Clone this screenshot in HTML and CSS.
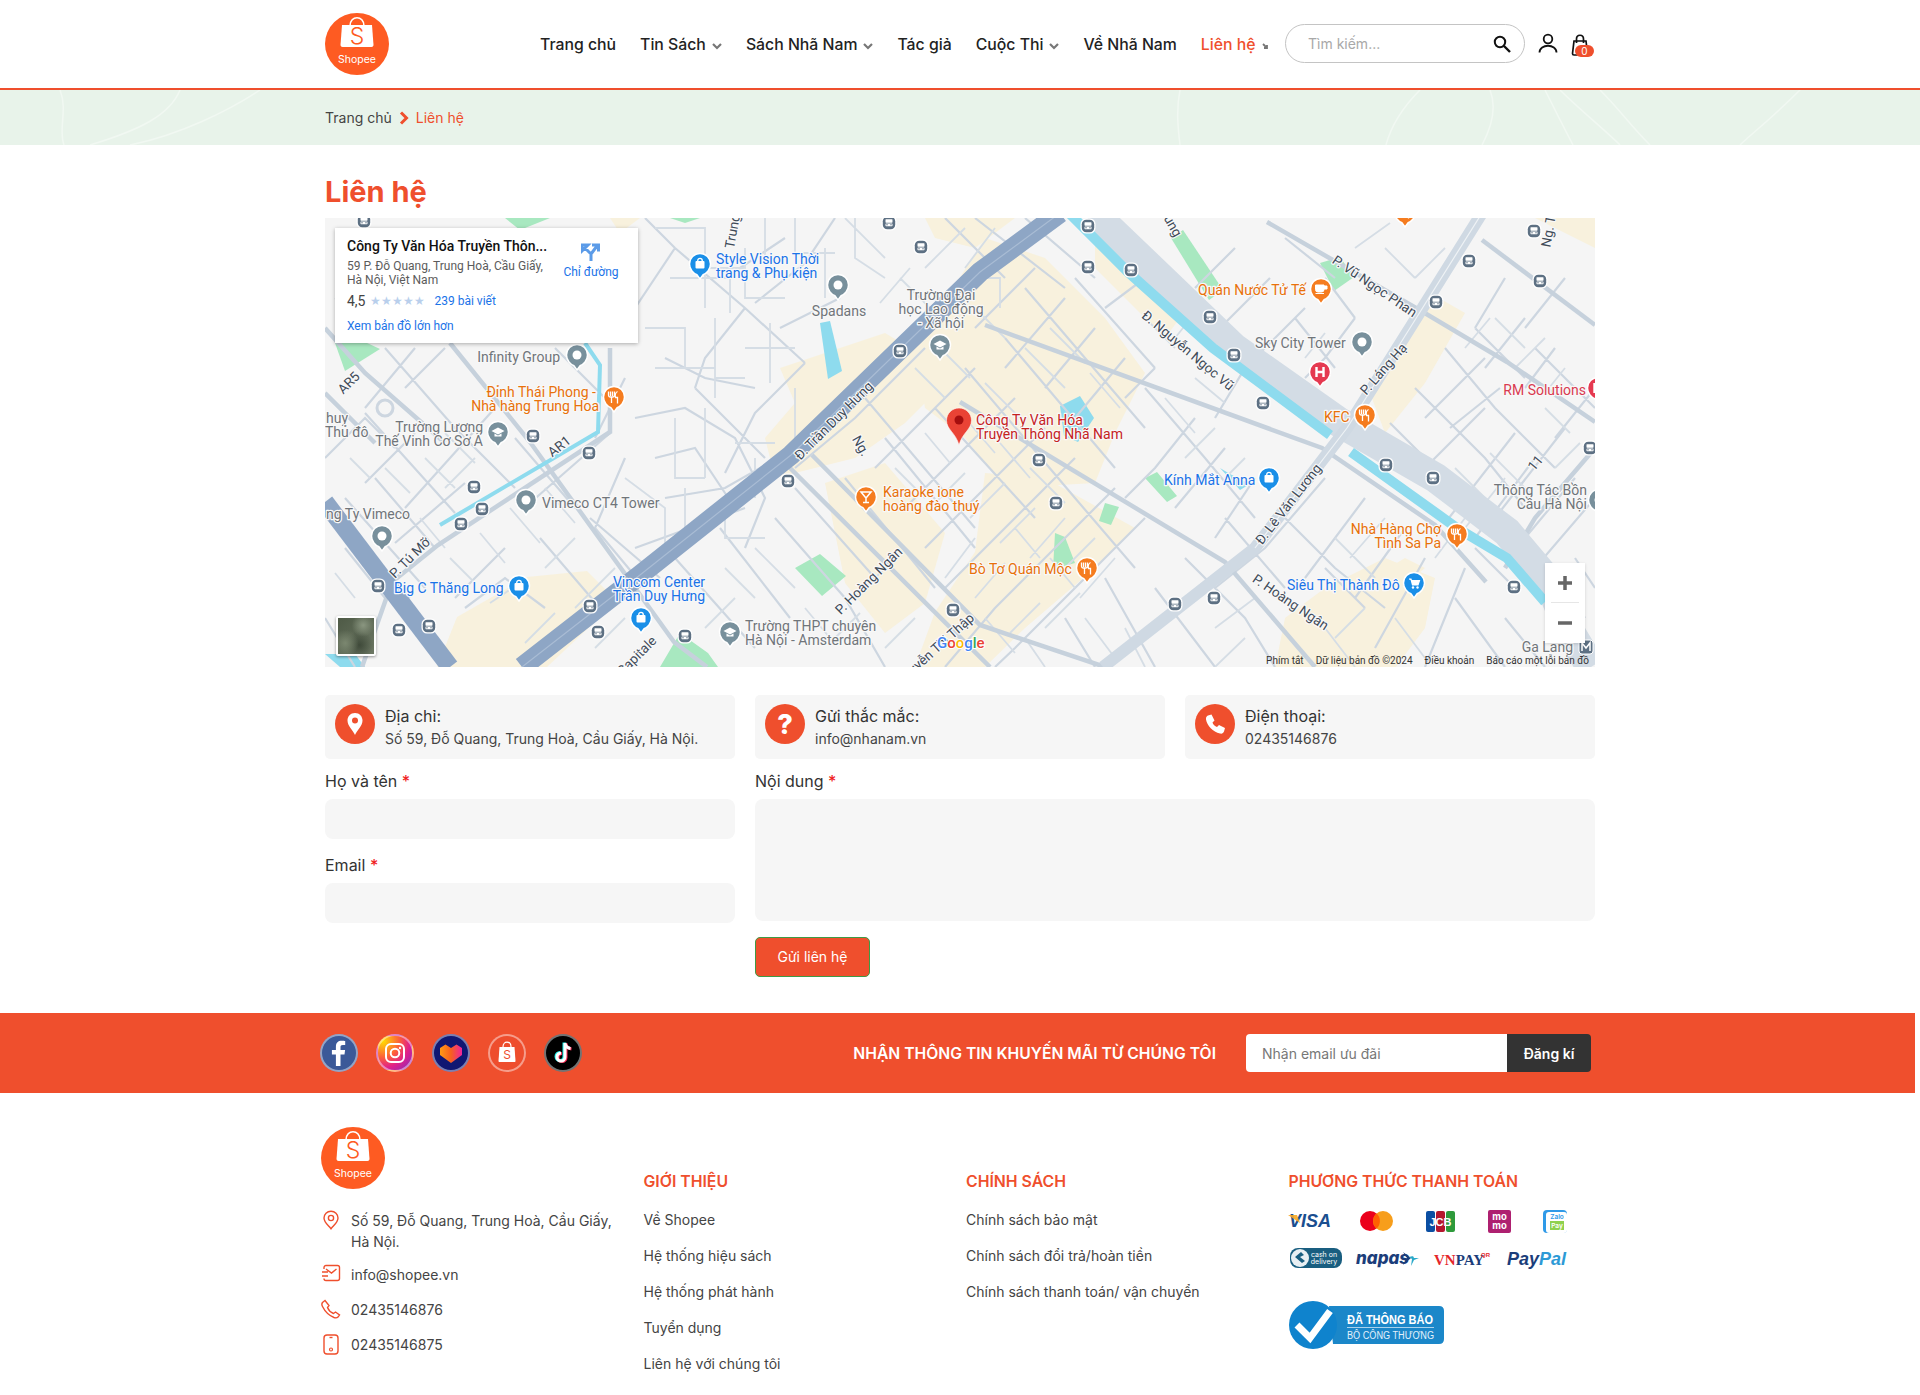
FILE: index.html
```html
<!DOCTYPE html>
<html lang="vi">

<head>
    <meta charset="UTF-8">
    <meta name="viewport" content="width=device-width, initial-scale=1.0">
    <title>Liên hệ</title>
    <link rel="stylesheet" href="styles.css">
</head>

<body>

    <svg class="defs" width="0" height="0">
        <defs>
            <symbol id="shopee" viewBox="0 0 64 62">
                <ellipse cx="32" cy="31" rx="32" ry="31" fill="#fe5b22" />
                <path d="M25 13c0-11 14-11 14 0" fill="none" stroke="#fff" stroke-width="1.600" />
                <path d="M17 12h30l1.500 20c0 1-1 2-2 2H17.500c-1 0-2-1-2-2z" fill="#fff" />
                <text x="32" y="31" text-anchor="middle" class="logo-s">S</text>
                <text x="32" y="50" text-anchor="middle" class="logo-t">Shopee</text>
            </symbol>
            <path id="drop" d="M-10.500 0a10.500 10.500 0 0 1 21 0c0 5.500-4 9.500-7.500 10.800L0 15l-3-4.200C-6.500 9.500-10.500 5.500-10.500 0z" stroke="#fff" stroke-width="1.500" />
            <g id="p-gray">
                <use href="#drop" fill="#78909c" />
                <circle r="4.500" fill="#fff" />
            </g>
            <g id="p-edu">
                <use href="#drop" fill="#78909c" />
                <path d="M-6.500-1 0-4.500 6.500-1 0 2.500z" fill="#fff" />
                <path d="M-3.500 1.500v3h7v-3L0 3.500z" fill="#fff" />
            </g>
            <g id="p-blue">
                <use href="#drop" fill="#1a8fe8" />
                <rect x="-4.500" y="-3" width="9" height="7.500" rx="1" fill="#fff" />
                <path d="M-2.300-3c0-3.500 4.600-3.500 4.600 0" fill="none" stroke="#fff" stroke-width="1.300" />
            </g>
            <g id="p-cart">
                <use href="#drop" fill="#1a8fe8" />
                <path d="M-5-4h2l1.500 6h5.500l1.500-4.500H-2.500" fill="#fff" stroke="#fff" stroke-width="1.200" />
                <circle cx="-1" cy="4.500" r="1.200" fill="#fff" />
                <circle cx="3.500" cy="4.500" r="1.200" fill="#fff" />
            </g>
            <g id="p-food">
                <use href="#drop" fill="#f57c1f" />
                <path d="M-3.500-5.500v4.500M-1.500-5.500v4.500M-5.500-5.500v3.500q0 2 2 2h2q2 0 2-2v-3.500M-2.500 0v6M3.500-5.500c-2 1-2.500 4-2 6h2v6" fill="none" stroke="#fff" stroke-width="1.300" />
            </g>
            <g id="p-cup">
                <use href="#drop" fill="#f57c1f" />
                <path d="M-5.500-4h8.500v4.500q0 2.500-2.500 2.500h-3.500q-2.500 0-2.500-2.500zM3-3h3v3h-3M-5.500 4.500h8.500" fill="#fff" stroke="#fff" />
            </g>
            <g id="p-bar">
                <use href="#drop" fill="#f57c1f" />
                <path d="M-5-5h10L0 1zM0 1v4M-3 5.500h6" fill="none" stroke="#fff" stroke-width="1.500" />
            </g>
            <g id="p-h">
                <use href="#drop" fill="#e53950" />
                <path d="M-3.500-5v10M3.500-5v10M-3.500 0h7" fill="none" stroke="#fff" stroke-width="2.400" />
            </g>
            <g id="bus">
                <rect x="-7.500" y="-7.500" width="15" height="15" rx="5.500" fill="#fff" />
                <rect x="-6.200" y="-6.200" width="12.400" height="12.400" rx="4.500" fill="#5d7083" />
                <rect x="-3.500" y="-3.800" width="7" height="3.500" rx=".6" fill="#fff" />
                <rect x="-3.500" y=".4" width="7" height="2.800" rx=".6" fill="#fff" />
                <circle cx="-2" cy="1.800" r=".7" fill="#5d7083" />
                <circle cx="2" cy="1.800" r=".7" fill="#5d7083" />
            </g>
        </defs>
    </svg>

    <header class="site-header">
        <div class="header-inner">
            <svg class="logo" width="64" height="62"><use href="#shopee" /></svg>
            <nav class="main-nav">
                <a href="#">Trang chủ</a>
                <a href="#">Tin Sách<svg class="chev" width="10" height="7" viewBox="0 0 10 7"><path d="M1 1l4 4 4-4" /></svg></a>
                <a href="#">Sách Nhã Nam<svg class="chev" width="10" height="7" viewBox="0 0 10 7"><path d="M1 1l4 4 4-4" /></svg></a>
                <a href="#">Tác giả</a>
                <a href="#">Cuộc Thi<svg class="chev" width="10" height="7" viewBox="0 0 10 7"><path d="M1 1l4 4 4-4" /></svg></a>
                <a href="#">Về Nhã Nam</a>
                <a href="#" class="active">Liên hệ<svg class="chev chev-active" width="8" height="7" viewBox="0 0 8 7"><path d="M1 1l4 4M5 2v3H2" /></svg></a>
            </nav>
            <div class="search-box">
                <input type="text" placeholder="Tìm kiếm...">
                <svg width="18" height="18" viewBox="0 0 18 18"><circle cx="7" cy="7" r="5.200" fill="none" stroke="#111" stroke-width="2" /><path d="M11 11l6 6" stroke="#111" stroke-width="2.400" /></svg>
            </div>
            <svg class="user-icon" width="20" height="20" viewBox="0 0 20 20"><circle cx="10" cy="6" r="4.300" fill="none" stroke="#111" stroke-width="1.800" /><path d="M1.500 19.500c0-9 17-9 17 0" fill="none" stroke="#111" stroke-width="1.800" /></svg>
            <div class="cart">
                <svg width="18" height="22" viewBox="0 0 18 22"><path d="M3 7h12l1.500 12.500c0 1-.5 1.500-1.500 1.500H3c-1 0-1.500-.5-1.500-1.500z" fill="none" stroke="#111" stroke-width="1.700" /><path d="M5.500 9V5c0-5 7-5 7 0v4" fill="none" stroke="#111" stroke-width="1.700" /></svg>
                <span class="cart-count">0</span>
            </div>
        </div>
    </header>

    <div class="breadcrumb">
        <svg class="contours" width="1920" height="55" viewBox="0 0 1920 55">
            <path d="M60 0c8 20-2 40 4 55M180 0c-10 25-40 40-90 55M260 0c-30 20-80 45-130 55M1180 0c-4 20-2 38 0 55M1420 0c-20 20-30 40-34 55M1490 0c8 20 0 40-8 55M1545 0c10 20 20 40 28 55M1560 0c20 20 45 40 60 55M1600 0c20 20 30 35 50 55M1800 0c-30 30-50 45-60 55" />
        </svg>
        <div class="crumbs">
            <a href="#">Trang chủ</a>
            <svg width="10" height="14" viewBox="0 0 10 14"><path d="M2 1.500l5.500 5.500L2 12.500" fill="none" stroke="#ef4f2d" stroke-width="3" /></svg>
            <span>Liên hệ</span>
        </div>
    </div>

    <main class="container">
        <h1 class="page-title">Liên hệ</h1>

        <div class="map">
            <svg class="map-svg" width="1270" height="449" viewBox="0 0 1270 449">
                <!-- khu dan cu -->
                <g fill="#f8f1dd">
                    <path d="M455 150l105-35 25 15 35-25 30 30-70 70-50 35-80 20-10-40 30-35z" />
                    <path d="M590 130l70-110 60 20 60 60 40 55-30 60-20 50-90 5-40-50-40-30z" />
                    <path d="M500 265l60-20 60 70-20 70-40 30-40-50z" />
                    <path d="M660 255l60 5 90 50-40 40-70 60-40 39-70 0 20-55 40-60z" />
                    <path d="M112 449l20-50 70-40 60-6 30 30-70 66z" />
                    <path d="M1105 75l35 20-40 70-40 50-15-40 30-60z" />
                    <path d="M960 400l40-30 60-30 50 20-10 50-30 40-120 0z" />
                    <path d="M285 0l30 0-20 15zM1030 370l50-30 20 10-60 50z" />
                    <path d="M600 0l90 0-40 30-40-10zM770 0l60 40 40 40-30 40-70-70z" />
                    <path d="M1210 0h60v30z" />
                </g>
                <!-- cong vien -->
                <g fill="#a8e8c0">
                    <path d="M10 125l15-8 30 14-35 22z" />
                    <path d="M846 20l12-8 40 60-14 10z" />
                    <path d="M995 45l20-6 14 20-20 14z" />
                    <path d="M470 350l25-14 26 22-24 20zM335 449l20-34 28 20 10 14z" />
                    <path d="M820 260l12-6 20 24-10 6zM780 285l14 4-8 18-12-4zM730 315l10 4 10 26-22 6z" />
                    <path d="M180 0h45l-30 12zM345 0h30l-15 5z" />
                </g>
                <!-- ho nuoc -->
                <g fill="#8edbee">
                    <path d="M495 105l10-2 12 50-14 8z" />
                    <path d="M735 188l20-10 14 22-16 24-14-6z" />
                    <path d="M895 250l10 6 20 10-10 6z" />
                    <path d="M0 436h30l10 13H15z" />
                </g>
                <!-- duong nho -->
                <path class="r-minor" d="M320 0l30 30 70 60 60 55M350 30l-40 60-30 20M420 90l-40 50-10 30M480 145l-50 50-30 60M370 170l70 70M400 60l60-40M430 85l50-40 30-45M455 110l60-30M340 140l40 20 50 10M310 200l50-10 50 30 30 60-20 50M330 240l40-10 40 60M300 160l-30 60M340 280l60-10 70-40M310 330l110-40M350 340l80 90M395 310l70 90M450 300l70 80 40 69M470 270l80 90M520 260l90 110M560 220l90 110M540 180l110 130M610 190l100 110M640 150l110 130 60 70M680 120l110 130M700 70l120 140M750 60l80 90M600 130l-70 70-60 50M650 150l-100 100M690 180l-110 110M720 210l-120 120M750 240l-130 130M790 270l-120 120 -50 59M820 300l-130 130-20 19M710 50l-60 60M740 80l-60 70M770 110l-50 60M800 140l-50 60M650 0l90 70M620 0l60 60M700 0l70 60M780 90l40-30M830 150l-30 30M820 170l60 70 50 60M870 200l-40 50-30 30M900 230l-50 60M930 260l-40 60M860 340l60 60 30 49M900 300l60 70M830 370l60 79M780 360l50 89M740 400l30 49M1000 260l-60 70-50 40M1040 280l-60 80M1080 310l-50 70M1100 340l-50 90M1140 350l-40 99M1000 350l40 40M960 300l50 50 50 40M1180 400l40 49M1130 380l50 69M980 90l-60 60-30 50M945 60l-60 60M910 30l-40 40M970 100l40 50M1000 60l30 40M960 20l50 40M1030 100l-30 40-20 20M1120 130l50 60 60 60M1090 170l70 70 40 50M1065 205l70 70M1125 210l50-40M1160 190l-60 60M1190 215l-70 90M1210 240l-60 80M1240 210l-70 90M1180 300l50 50M1150 330l40 40M1100 200l60-60M1230 130l-30 40M1270 170l-40 50M1200 100l-40 50M1180 60l-30 50M1240 60l-40 50M1150 110l50 50M1210 130l60 60M1250 260l-50 60M1270 280l-60 70M1230 360l30 40M1250 340l20 30M30 30l50 60M60 130l70 80 60 60M90 130l-50 60M0 240l40-40 30 30M40 195l90 100M90 215l-50 50M140 265l-70 60M170 190l-90 100M190 220l60 70M230 130l60 60M285 215l-80 70M300 240l-30 70 50 60M140 390l40-30 40 30M215 320l60 70M265 300l70 60M180 330l-50 50M50 260l60 70M20 280l80 90M20 330l40 50M0 400l30 49M120 130l-40 40" />
                <!-- ngo hem -->
                <path class="r-alley" d="M330 10h50v40h40M345 60h60v35M380 20v70M420 30v50h40M440 0v40M470 0v35h40M500 30v50M530 0v40l30 20M320 110h40v40M330 150h60v30M390 100v60h30M420 130h50M445 105v60M470 170v50M350 200v60h30M380 190v70M410 225h40M300 260l40 30v40M360 270v50M400 280v40h40M430 240v40M520 0l40 40M575 60l30 30M555 85l30-35M600 50l40-40M635 60h40v30M670 10l-30 40M650 90l30 30M590 150l30 30M615 130l30 30M660 165l35 35M700 130l40 40M725 110l35 35M765 155l30 35M640 200l30 35M675 225l30 35M705 250l35 35M600 215l25 30M570 250l30 30M640 255l-30 30M680 265l-35 35M710 290l-35 35M740 300l-35 40M770 320l-35 35M790 340l-35 40M755 375l-35 35M715 385l-30 30M680 345l-30 35M650 320l-30 40M690 310l25 30M725 340l25 30M660 400l30 35M700 420l20 29M760 400l30 40M800 410l20 39M820 100l30 30M850 120l20-25M870 160l30 25M840 180l30 35M890 210l-30 30M920 240l-20 20M965 170l25 25M1000 115l-20 25M1030 30l35-25M1060 30l30 30M1090 60l30-30M1140 130l25-30M1170 100l30 30M1190 150l30-30M1240 150l-20 25M1220 190l25 25M1255 225l-25 25M1130 250l40 40M1165 235l40 40M1140 300l-30 40M1180 260l-40 50M1060 300l-35 40M1010 320l40 40M1040 390l-30 30M1070 400l30 40M1000 410l30 39M920 420l-30 29M890 410l40-30M60 30l-20 30M90 100l30-20M30 100l-20-20M25 240l20 20M60 250l25 25M100 240l30 30M120 215l30 30M150 240l-30 30M95 300l25 30M125 340l25 25M155 315l25 30M185 290l30 35M220 270l30 35M165 385l30-20M60 355l25 25M10 355l20 25M250 320l-30 30M290 350l-40 40M230 395l-30 30M300 400l-30 30M400 350l30 30M430 330l40 40M410 380l-30 30M480 390l25 30M535 395l-30 30M560 350l-30 30M590 400l-30 30" />
                <!-- duong vua -->
                <g class="r-mid">
                    <path d="M125 125l80 99 144 200 33 25" />
                    <path d="M487 237l168 170 125 42" />
                    <path d="M465 250l200 199" />
                    <path d="M660 107l337 123 113 77 51 57" />
                    <path d="M635 184l265 160 90 105" />
                    <path d="M942 4l156 90 84 50 88 60" />
                    <path d="M1157 22l113 85" />
                    <path d="M285 130v84l-172 113-46 37-30 85" />
                    <path d="M0 110l40 45 80 70M0 175l50 50" />
                    <path d="M1270 230l-60 70-30 50" />
                </g>
                <circle cx="60" cy="190" r="8" fill="#f5f5f5" stroke="#cdd6e0" stroke-width="3" />
                <!-- duong lon -->
                <path class="r-wide" d="M768 -5L909 130 1014 204 1111 260 1182 314 1224 364 1245 414 1266 449" />
                <path class="r-lvl" d="M1157 -5L1085 110 1022 210 930 330 778 449" />
                <path class="r-lvl-line" d="M1157 -5L1085 110 1022 210 930 330" />
                <path class="r-water" d="M744 -5L803 54 888 130 1005 217" />
                <path class="r-water" d="M1026 234L1132 310 1182 340 1220 384" />
                <path class="r-canal" d="M260 125L275 147 273 214 115 307" />
                <path class="r-khuat" d="M0 284L125 449" />
                <path class="r-tdh" d="M735 -5L655 54 466 237 315 357 197 449" />
                <path class="r-tdh-line" d="M735 -5L655 54 466 237 315 357 197 449" />

                <!-- tram xe buyt -->
                <use href="#bus" x="39" y="3" /><use href="#bus" x="564" y="5" /><use href="#bus" x="596" y="29" /><use href="#bus" x="575" y="133" />
                <use href="#bus" x="208" y="218" /><use href="#bus" x="264" y="235" /><use href="#bus" x="149" y="269" /><use href="#bus" x="157" y="291" />
                <use href="#bus" x="136" y="306" /><use href="#bus" x="463" y="263" /><use href="#bus" x="53" y="368" /><use href="#bus" x="74" y="412" />
                <use href="#bus" x="104" y="408" /><use href="#bus" x="265" y="388" /><use href="#bus" x="273" y="414" /><use href="#bus" x="360" y="418" />
                <use href="#bus" x="628" y="392" /><use href="#bus" x="763" y="8" /><use href="#bus" x="763" y="49" /><use href="#bus" x="806" y="52" />
                <use href="#bus" x="885" y="99" /><use href="#bus" x="909" y="137" /><use href="#bus" x="938" y="185" /><use href="#bus" x="714" y="242" />
                <use href="#bus" x="731" y="285" /><use href="#bus" x="1144" y="43" /><use href="#bus" x="1209" y="13" /><use href="#bus" x="1215" y="63" />
                <use href="#bus" x="1111" y="84" /><use href="#bus" x="1265" y="230" /><use href="#bus" x="1061" y="247" /><use href="#bus" x="1108" y="260" />
                <use href="#bus" x="1189" y="369" /><use href="#bus" x="889" y="380" /><use href="#bus" x="850" y="386" />

                <!-- dia diem -->
                <use href="#p-blue" x="375" y="46" /><use href="#p-gray" x="513" y="67" /><use href="#p-edu" x="615" y="127" /><use href="#p-gray" x="252" y="137" />
                <use href="#p-food" x="289" y="179" /><use href="#p-edu" x="173" y="214" /><use href="#p-gray" x="201" y="282" /><use href="#p-gray" x="57" y="318" />
                <use href="#p-blue" x="194" y="368" /><use href="#p-blue" x="316" y="400" /><use href="#p-edu" x="405" y="414" /><use href="#p-bar" x="541" y="279" />
                <use href="#p-cup" x="996" y="71" /><use href="#p-gray" x="1037" y="124" /><use href="#p-h" x="995" y="154" /><use href="#p-h" x="1273" y="170" />
                <use href="#p-food" x="1040" y="197" /><use href="#p-blue" x="944" y="260" /><use href="#p-gray" x="1274" y="282" /><use href="#p-food" x="1132" y="316" />
                <use href="#p-food" x="762" y="350" /><use href="#p-cart" x="1089" y="365" /><use href="#p-food" x="1080" y="-6" />

                <g class="ml ml-blue">
                    <text x="391" y="46">Style Vision Thời</text>
                    <text x="391" y="60">trang &amp; Phụ kiện</text>
                    <text x="69" y="375">Big C Thăng Long</text>
                    <text x="334" y="369" text-anchor="middle">Vincom Center</text>
                    <text x="334" y="383" text-anchor="middle">Trần Duy Hưng</text>
                    <text x="839" y="267">Kính Mắt Anna</text>
                    <text x="962" y="372">Siêu Thị Thành Đô</text>
                </g>
                <g class="ml ml-gray">
                    <text x="514" y="98" text-anchor="middle">Spadans</text>
                    <text x="616" y="82" text-anchor="middle">Trường Đại</text>
                    <text x="616" y="96" text-anchor="middle">học Lao động</text>
                    <text x="616" y="110" text-anchor="middle">- Xã hội</text>
                    <text x="235" y="144" text-anchor="end">Infinity Group</text>
                    <text x="158" y="214" text-anchor="end">Trường Lương</text>
                    <text x="158" y="228" text-anchor="end">Thế Vinh Cơ Sở A</text>
                    <text x="1" y="205">huy</text>
                    <text x="0" y="219">Thủ đô</text>
                    <text x="217" y="290">Vimeco CT4 Tower</text>
                    <text x="1" y="301">ng Ty Vimeco</text>
                    <text x="420" y="413">Trường THPT chuyên</text>
                    <text x="420" y="427">Hà Nội - Amsterdam</text>
                    <text x="930" y="130">Sky City Tower</text>
                    <text x="1262" y="277" text-anchor="end">Thông Tác Bồn</text>
                    <text x="1262" y="291" text-anchor="end">Cầu Hà Nội</text>
                    <text x="1248" y="434" text-anchor="end">Ga Lang</text>
                </g>
                <g class="ml ml-orange">
                    <text x="271" y="179" text-anchor="end">Đỉnh Thái Phong -</text>
                    <text x="274" y="193" text-anchor="end">Nhà hàng Trung Hoa</text>
                    <text x="558" y="279">Karaoke ione</text>
                    <text x="558" y="293">hoàng đào thuý</text>
                    <text x="873" y="77">Quán Nước Tử Tế</text>
                    <text x="999" y="204">KFC</text>
                    <text x="1116" y="316" text-anchor="end">Nhà Hàng Chợ</text>
                    <text x="1116" y="330" text-anchor="end">Tình Sa Pa</text>
                    <text x="644" y="356">Bò Tơ Quán Mộc</text>
                </g>
                <g class="ml ml-red">
                    <text x="651" y="207">Công Ty Văn Hóa</text>
                    <text x="651" y="221">Truyền Thông Nhã Nam</text>
                </g>
                <text class="ml ml-pink" x="1261" y="177" text-anchor="end">RM Solutions</text>

                <g class="road-label" text-anchor="middle">
                    <text transform="translate(27 168) rotate(-45)">AR5</text>
                    <text transform="translate(237 232) rotate(-38)">AR1</text>
                    <text transform="translate(88 343) rotate(-45)">P. Tú Mỡ</text>
                    <text transform="translate(512 206) rotate(-45)">Đ. Trần Duy Hưng</text>
                    <text transform="translate(532 230) rotate(60)">Ng.</text>
                    <text transform="translate(547 366) rotate(-45)">P. Hoàng Ngân</text>
                    <text transform="translate(412 14) rotate(-80)">Trung</text>
                    <text transform="translate(315 441) rotate(-45)">Capitale</text>
                    <text transform="translate(607 440) rotate(-42)">Đ. Nguyễn Thị Thập</text>
                    <text transform="translate(860 136) rotate(40)">Đ. Nguyễn Ngọc Vũ</text>
                    <text transform="translate(1047 72) rotate(34)">P. Vũ Ngọc Phan</text>
                    <text transform="translate(1062 154) rotate(-49)">P. Láng Hạ</text>
                    <text transform="translate(967 289) rotate(-52)">Đ. Lê Văn Lương</text>
                    <text transform="translate(963 388) rotate(34)">P. Hoàng Ngân</text>
                    <text transform="translate(1228 14) rotate(-80)">Ng. T</text>
                    <text transform="translate(1214 248) rotate(-50)">11</text>
                    <text transform="translate(844 10) rotate(60)">ung</text>
                </g>

                <!-- ghim do -->
                <path d="M634 190c-7 0-12.500 5.500-12.500 12.500 0 9 9 12 12.500 24.500 3.500-12.500 12.500-15.500 12.500-24.500 0-7-5.500-12.500-12.500-12.500z" fill="#ea4335" stroke="#fff" stroke-width=".6" />
                <circle cx="634" cy="202" r="4.500" fill="#a50e0e" />

                <text class="g-logo" x="612" y="430"><tspan fill="#4285f4">G</tspan><tspan fill="#ea4335">o</tspan><tspan fill="#fbbc05">o</tspan><tspan fill="#4285f4">g</tspan><tspan fill="#34a853">l</tspan><tspan fill="#ea4335">e</tspan></text>

                <!-- ga metro -->
                <rect x="1254" y="422" width="14" height="14" rx="3" fill="#5d7083" stroke="#fff" />
                <path d="M1257 433v-8l4 5 4-5v8" fill="none" stroke="#fff" stroke-width="1.500" />
            </svg>

            <div class="map-card">
                <div class="map-card-info">
                    <div class="map-card-title">Công Ty Văn Hóa Truyền Thôn...</div>
                    <div class="map-card-addr">59 P. Đỗ Quang, Trung Hoà, Cầu Giấy,<br>Hà Nội, Việt Nam</div>
                    <div class="map-card-rate"><span class="rate-num">4,5</span><span class="rate-stars">★★★★★</span><a href="#">239 bài viết</a></div>
                    <a href="#" class="map-card-link">Xem bản đồ lớn hơn</a>
                </div>
                <a href="#" class="map-card-dir">
                    <svg width="20" height="20" viewBox="0 0 20 20"><path d="M10 19v-7L4 6M10 12l6-8M11 3h6.500v6.500M1 3h6L1 9z" fill="none" stroke="#5b9be8" stroke-width="3" /></svg>
                    Chỉ đường
                </a>
            </div>

            <div class="map-thumb"></div>

            <div class="map-zoom">
                <svg width="40" height="40" viewBox="0 0 40 40"><path d="M13 20h14M20 13v14" stroke="#666" stroke-width="3.500" /></svg>
                <span class="map-zoom-sep"></span>
                <svg width="40" height="40" viewBox="0 0 40 40"><path d="M13 20h14" stroke="#666" stroke-width="3.500" /></svg>
            </div>

            <div class="map-attr">
                <span>Phím tắt</span><span>Dữ liệu bản đồ ©2024</span><span>Điều khoản</span><span>Báo cáo một lỗi bản đồ</span>
            </div>
        </div>

        <div class="info-row">
            <div class="info-card">
                <span class="info-icon"><svg width="22" height="26" viewBox="0 0 22 26"><path d="M11 2C6.500 2 3.500 5.500 3.500 9.500 3.500 15 9 19 11 24c2-5 7.500-9 7.500-14.500C18.500 5.500 15.500 2 11 2z" fill="#fff" /><circle cx="11" cy="9.500" r="3" fill="#ef4f2d" /></svg></span>
                <div class="info-body">
                    <div class="info-title">Địa chỉ:</div>
                    <div class="info-text">Số 59, Đỗ Quang, Trung Hoà, Cầu Giấy, Hà Nội.</div>
                </div>
            </div>
            <div class="info-card">
                <span class="info-icon info-q">?</span>
                <div class="info-body">
                    <div class="info-title">Gửi thắc mắc:</div>
                    <div class="info-text">info@nhanam.vn</div>
                </div>
            </div>
            <div class="info-card">
                <span class="info-icon"><svg width="22" height="22" viewBox="0 0 22 22"><path d="M4 2.500l3.500-1 3 6-2 2c.5 2 2.500 4 4.500 4.500l2-2 6 3-1 3.500c-.5 1.500-2 2.500-4 2C9 19 3 12.500 2 6.500c-.3-2 .7-3.500 2-4z" fill="#fff" /></svg></span>
                <div class="info-body">
                    <div class="info-title">Điện thoại:</div>
                    <div class="info-text">02435146876</div>
                </div>
            </div>
        </div>

        <form class="contact-form">
            <div class="form-left">
                <label>Họ và tên <b>*</b></label>
                <input type="text">
                <label>Email <b>*</b></label>
                <input type="text">
            </div>
            <div class="form-right">
                <label>Nội dung <b>*</b></label>
                <textarea></textarea>
                <button type="button">Gửi liên hệ</button>
            </div>
        </form>
    </main>

    <footer class="site-footer">
        <div class="news-bar">
            <div class="news-inner">
                <div class="social">
                    <a href="#" class="soc soc-fb"><svg width="34" height="34" viewBox="0 0 34 34"><path d="M18.500 30V18.500h4l.6-4.500h-4.600v-2.800c0-1.400.5-2.200 2.300-2.200h2.400V5c-.5 0-2-.2-3.500-.2-3.500 0-5.800 2-5.800 5.900V14h-4v4.500h4V30z" fill="#fff" /></svg></a>
                    <a href="#" class="soc soc-ig"><svg width="34" height="34" viewBox="0 0 34 34"><rect x="8" y="8" width="18" height="18" rx="5" fill="none" stroke="#fff" stroke-width="2" /><circle cx="17" cy="17" r="4.300" fill="none" stroke="#fff" stroke-width="2" /><circle cx="22" cy="12" r="1.200" fill="#fff" /></svg></a>
                    <a href="#" class="soc soc-lz"><svg width="34" height="34" viewBox="0 0 34 34"><path d="M6 12l5.500-3.500L17 12l5.500-3.500L28 12v7l-11 8-11-8z" fill="url(#lzg)" /><defs><linearGradient id="lzg" x1="0" x2="1"><stop offset="0" stop-color="#ff9a14" /><stop offset=".5" stop-color="#f7601f" /><stop offset="1" stop-color="#f0249c" /></linearGradient></defs></svg></a>
                    <a href="#" class="soc soc-sp"><svg width="34" height="34" viewBox="0 0 34 34"><path d="M13 11c0-6.500 8-6.500 8 0" fill="none" stroke="#fff" stroke-width="1.200" /><path d="M9.500 11h15l1 14c0 .7-.5 1-1 1H9.500c-.5 0-1-.3-1-1z" fill="#fff" /><text x="17" y="23" text-anchor="middle" class="soc-s">S</text></svg></a>
                    <a href="#" class="soc soc-tt"><svg width="34" height="34" viewBox="0 0 34 34"><path d="M19 7v14a4 4 0 1 1-4-4M19 7c.5 3 2.500 5 5.500 5.500" fill="none" stroke="#25f4ee" stroke-width="3" transform="translate(-1 -.5)" /><path d="M19 7v14a4 4 0 1 1-4-4M19 7c.5 3 2.500 5 5.500 5.500" fill="none" stroke="#fe2c55" stroke-width="3" transform="translate(1 .5)" /><path d="M19 7v14a4 4 0 1 1-4-4M19 7c.5 3 2.500 5 5.500 5.500" fill="none" stroke="#fff" stroke-width="3" /></svg></a>
                </div>
                <div class="news-right">
                    <span class="news-title">NHẬN THÔNG TIN KHUYẾN MÃI TỪ CHÚNG TÔI</span>
                    <div class="news-form">
                        <input type="text" placeholder="Nhận email ưu đãi">
                        <button type="button">Đăng kí</button>
                    </div>
                </div>
            </div>
        </div>

        <div class="footer-main">
            <div class="footer-col">
                <svg class="logo" width="64" height="62"><use href="#shopee" /></svg>
                <ul class="contact-list">
                    <li>
                        <svg width="18" height="20" viewBox="0 0 18 20"><path d="M9 1.200c-4 0-7 3-7 6.800 0 4.500 4.500 7.500 7 10.800 2.500-3.300 7-6.300 7-10.800 0-3.800-3-6.800-7-6.800z" fill="none" stroke="#ef4f2d" stroke-width="1.400" /><circle cx="9" cy="8" r="2.600" fill="none" stroke="#ef4f2d" stroke-width="1.400" /></svg>
                        <span>Số 59, Đỗ Quang, Trung Hoà, Cầu Giấy,<br>Hà Nội.</span>
                    </li>
                    <li>
                        <svg width="20" height="18" viewBox="0 0 20 18"><path d="M3 5V3.500C3 2 4 1.500 5 1.500h11.500c1.200 0 2 .8 2 2v11c0 1.200-.8 2-2 2H5c-1 0-2-.5-2-2M5 5l5.500 4 5-4M1 8h6M1 12h6" fill="none" stroke="#ef4f2d" stroke-width="1.400" /></svg>
                        <span>info@shopee.vn</span>
                    </li>
                    <li>
                        <svg width="20" height="20" viewBox="0 0 20 20"><path d="M4 1.500L1.500 3.500c-.8 1-.8 2.500 0 4C4 12.500 8 16.500 13 18.500c1.500.5 3 .5 4-.5l1.500-2-4-3-2 1.500c-2.500-1-5-3.500-6-6L8 6.500z" fill="none" stroke="#ef4f2d" stroke-width="1.400" /></svg>
                        <span>02435146876</span>
                    </li>
                    <li>
                        <svg width="18" height="21" viewBox="0 0 18 21"><rect x="2" y="1" width="14" height="19" rx="3" fill="none" stroke="#ef4f2d" stroke-width="1.400" /><path d="M7.500 3.500h3" stroke="#ef4f2d" stroke-width="1.400" /><circle cx="9" cy="15.500" r="1.500" fill="none" stroke="#ef4f2d" stroke-width="1.200" /></svg>
                        <span>02435146875</span>
                    </li>
                </ul>
            </div>
            <div class="footer-col">
                <h3>GIỚI THIỆU</h3>
                <ul class="link-list">
                    <li><a href="#">Về Shopee</a></li>
                    <li><a href="#">Hệ thống hiệu sách</a></li>
                    <li><a href="#">Hệ thống phát hành</a></li>
                    <li><a href="#">Tuyển dụng</a></li>
                    <li><a href="#">Liên hệ với chúng tôi</a></li>
                </ul>
            </div>
            <div class="footer-col">
                <h3>CHÍNH SÁCH</h3>
                <ul class="link-list">
                    <li><a href="#">Chính sách bảo mật</a></li>
                    <li><a href="#">Chính sách đổi trả/hoàn tiền</a></li>
                    <li><a href="#">Chính sách thanh toán/ vận chuyển</a></li>
                </ul>
            </div>
            <div class="footer-col">
                <h3>PHƯƠNG THỨC THANH TOÁN</h3>
                <svg class="pay" width="290" height="62" viewBox="0 0 290 62">
                    <!-- hang 1 -->
                    <text x="0" y="17" class="pay-visa">VISA</text>
                    <path d="M-1 5l9 0 3 8z" fill="#f7a823" opacity=".9" />
                    <circle cx="81" cy="11" r="10" fill="#eb001b" />
                    <circle cx="94" cy="11" r="10" fill="#f79e1b" />
                    <path d="M87.500 3.500a10 10 0 0 1 0 15 10 10 0 0 1 0-15z" fill="#ff5f00" />
                    <rect x="137" y="1" width="9" height="21" rx="2" fill="#0b4ea2" />
                    <rect x="147" y="1" width="9" height="21" rx="2" fill="#b5172e" />
                    <rect x="157" y="1" width="9" height="21" rx="2" fill="#2e9a3b" />
                    <text x="151.500" y="16" text-anchor="middle" class="pay-jcb">JCB</text>
                    <rect x="199" y="0" width="23" height="23" rx="2" fill="#ae2070" />
                    <text x="210.500" y="10" text-anchor="middle" class="pay-momo">mo</text>
                    <text x="210.500" y="19" text-anchor="middle" class="pay-momo">mo</text>
                    <rect x="254" y="0" width="24" height="23" rx="4" fill="#2f9ae8" />
                    <rect x="257" y="2" width="21" height="21" rx="3" fill="#fff" />
                    <text x="268" y="9" text-anchor="middle" class="pay-zalo">Zalo</text>
                    <rect x="261" y="11" width="14" height="9" fill="#8fd14f" />
                    <text x="268" y="18" text-anchor="middle" class="pay-zalo pay-zalo-w">Pay</text>
                    <!-- hang 2 -->
                    <rect x="1" y="38" width="52" height="20" rx="8" fill="#195e80" />
                    <circle cx="11" cy="48" r="9" fill="#fff" opacity=".9" />
                    <path d="M6 47l6-5 3 3-4 2 5 4-3 2z" fill="#195e80" />
                    <text x="35" y="47" text-anchor="middle" class="pay-cod">cash on</text>
                    <text x="35" y="54" text-anchor="middle" class="pay-cod">delivery</text>
                    <text x="67" y="54" class="pay-napas">napas</text>
                    <path d="M114 42l8 6-8 7 4-7z" fill="#1b3d7a" />
                    <path d="M121 40l4 8 5 0-5 2-3 6 1-7-3-2 4-1z" fill="#2aa9c9" />
                    <text x="145" y="55" class="pay-vn">VN<tspan fill="#1b3d7a">PAY</tspan></text>
                    <text x="192" y="47" class="pay-qr">QR</text>
                    <text x="218" y="55" class="pay-pp">Pay<tspan fill="#2d9ad6">Pal</tspan></text>
                </svg>
                <svg class="badge" width="156" height="48" viewBox="0 0 156 48">
                    <path d="M40 5h110q5 0 5 5v28q0 5-5 5H44z" fill="#1b87c9" />
                    <circle cx="24" cy="24" r="24" fill="#0f83cd" />
                    <path d="M8 24l13 13L41 10" fill="none" stroke="#fff" stroke-width="7" />
                    <text x="58" y="23" class="badge-top" textLength="86" lengthAdjust="spacingAndGlyphs">ĐÃ THÔNG BÁO</text>
                    <path d="M58 26.500h87" stroke="#cfe6f5" stroke-width=".8" />
                    <text x="58" y="38" class="badge-bot" textLength="87" lengthAdjust="spacingAndGlyphs">BỘ CÔNG THƯƠNG</text>
                </svg>
            </div>
        </div>
    </footer>

</body>

</html>
```

FILE: styles.css
```css
* {
    box-sizing: border-box;
}

html,
body {
    margin: 0;
    overflow-x: hidden;
}

body {
    background-color: white;
    color: #333;
    font-family: Inter, "Noto Sans", sans-serif;
    font-size: 14px;
}

a {
    color: inherit;
    text-decoration: none;
}

.defs {
    display: block;
    height: 0;
}

/* logo */
.logo {
    display: block;
    flex: none;
}

.logo-s {
    font-family: Inter, sans-serif;
    font-size: 23px;
    font-weight: 300;
    fill: #fe5b22;
}

.logo-t {
    font-family: Inter, sans-serif;
    font-size: 10.5px;
    fill: white;
}

/* header */
.site-header {
    height: 90px;
    border-bottom: 2px solid #ef4f2d;
}

.header-inner {
    width: 1270px;
    height: 88px;
    margin: auto;
    display: flex;
    align-items: center;
}

.main-nav {
    display: flex;
    align-items: center;
    gap: 24px;
    margin-left: 151px;
    flex: none;
    font-size: 15.8px;
    font-weight: 500;
    color: #222;
    white-space: nowrap;
}

.main-nav .active {
    color: #ef4f2d;
}

.chev {
    margin-left: 6px;
    fill: none;
    stroke: #777;
    stroke-width: 2.2;
}

.chev-active {
    stroke-width: 1.8;
}

.search-box {
    width: 240px;
    height: 39px;
    margin-left: auto;
    margin-bottom: 1px;
    padding: 0 13px 0 20px;
    display: flex;
    align-items: center;
    border: 1px solid #c4c4c4;
    border-radius: 20px;
}

.search-box input {
    flex: 1;
    min-width: 0;
    border: none;
    outline: none;
    font-family: Inter, sans-serif;
    font-size: 14px;
}

.search-box input::placeholder {
    color: #a8a8a8;
}

.user-icon {
    margin-left: 13px;
    margin-bottom: 3px;
}

.cart {
    position: relative;
    width: 24px;
    height: 24px;
    margin-left: 13px;
    margin-top: 4px;
}

.cart-count {
    position: absolute;
    left: 4px;
    top: 11px;
    width: 19px;
    height: 12px;
    border-radius: 6px;
    background-color: #ef4f2d;
    color: white;
    font-size: 10px;
    line-height: 12px;
    text-align: center;
}

/* breadcrumb */
.breadcrumb {
    position: relative;
    height: 55px;
    background-color: #e8f3ea;
}

.contours {
    position: absolute;
    left: 0;
    top: 0;
    fill: none;
    stroke: #f1f8f2;
    stroke-width: 1.5;
}

.crumbs {
    position: relative;
    width: 1270px;
    height: 55px;
    margin: auto;
    display: flex;
    align-items: center;
    gap: 7px;
    font-size: 14px;
    color: #444;
}

.crumbs span {
    color: #ef4f2d;
}

/* main */
.container {
    width: 1270px;
    margin: auto;
}

.page-title {
    margin: 0;
    height: 73px;
    padding-top: 27px;
    font-size: 29px;
    line-height: 40px;
    font-weight: 700;
    color: #ef4f2d;
}

/* ban do */
.map {
    position: relative;
    height: 449px;
    overflow: hidden;
    background-color: #f5f5f5;
}

.map-svg {
    display: block;
}

.r-minor {
    fill: none;
    stroke: #cdd6e0;
    stroke-width: 2.2;
}

.r-alley {
    fill: none;
    stroke: #d5dde5;
    stroke-width: 1.8;
}

.r-mid path {
    fill: none;
    stroke: #c6d1dc;
    stroke-width: 4.5;
}

.r-wide {
    fill: none;
    stroke: #d3dce5;
    stroke-width: 30;
}

.r-lvl {
    fill: none;
    stroke: #cfd9e3;
    stroke-width: 12;
}

.r-lvl-line {
    fill: none;
    stroke: #eef2f5;
    stroke-width: 1.2;
}

.r-water {
    fill: none;
    stroke: #8edbee;
    stroke-width: 10;
}

.r-canal {
    fill: none;
    stroke: #8edbee;
    stroke-width: 4;
}

.r-khuat {
    fill: none;
    stroke: #8ea6c5;
    stroke-width: 18;
}

.r-tdh {
    fill: none;
    stroke: #8ea6c5;
    stroke-width: 20;
}

.r-tdh-line {
    fill: none;
    stroke: #a9bcd4;
    stroke-width: 1.2;
}

.ml {
    font-family: Roboto, sans-serif;
    font-size: 14px;
    paint-order: stroke;
    stroke: #f8f8f8;
    stroke-width: 2.5;
    stroke-linejoin: round;
}

.ml-blue {
    fill: #1a73e8;
}

.ml-gray {
    fill: #70757a;
}

.ml-orange {
    fill: #e8710a;
}

.ml-red {
    fill: #c5221f;
}

.ml-pink {
    fill: #d93a4f;
}

.road-label {
    font-family: Roboto, sans-serif;
    font-size: 13.5px;
    fill: #3f4b58;
    paint-order: stroke;
    stroke: #f8f8f8;
    stroke-width: 2.5;
    stroke-linejoin: round;
}

.g-logo {
    font-family: Roboto, sans-serif;
    font-size: 15px;
    font-weight: 500;
    paint-order: stroke;
    stroke: #fff;
    stroke-width: 2;
}

.map-card {
    position: absolute;
    left: 10px;
    top: 10px;
    width: 303px;
    height: 115px;
    padding: 10px 12px;
    display: flex;
    background-color: white;
    box-shadow: 0 1px 4px rgba(0, 0, 0, .3);
    font-family: Roboto, sans-serif;
    color: #5b5b5b;
}

.map-card-info {
    width: 212px;
    flex: none;
}

.map-card-title {
    font-size: 14px;
    font-weight: 500;
    line-height: 17px;
    color: #111;
}

.map-card-addr {
    margin-top: 4px;
    font-size: 12px;
    line-height: 14px;
}

.map-card-rate {
    margin-top: 4px;
    height: 20px;
    display: flex;
    align-items: center;
    font-size: 12px;
}

.rate-num {
    font-size: 14px;
    color: #444;
}

.rate-stars {
    margin: 0 10px 0 4px;
    font-size: 12px;
    color: #b9cfec;
}

.map-card-rate a,
.map-card-link {
    color: #1a73e8;
}

.map-card-link {
    display: block;
    margin-top: 8px;
    font-size: 12px;
    line-height: 14px;
}

.map-card-dir {
    width: 60px;
    margin-left: 2px;
    display: flex;
    flex-direction: column;
    align-items: center;
    gap: 3px;
    padding-top: 4px;
    font-size: 12px;
    color: #1a73e8;
}

.map-thumb {
    position: absolute;
    left: 11px;
    top: 398px;
    width: 40px;
    height: 40px;
    border: 2px solid white;
    border-radius: 2px;
    background-color: #5d6a52;
    background-image: radial-gradient(circle at 70% 20%, #8a9680 0, transparent 30%), radial-gradient(circle at 20% 70%, #7b8770 0, transparent 35%), radial-gradient(circle at 60% 75%, #3f4a3a 0, transparent 40%), linear-gradient(135deg, #4e5a46, #6c7763);
    box-shadow: 0 1px 3px rgba(0, 0, 0, .4);
}

.map-zoom {
    position: absolute;
    right: 10px;
    top: 345px;
    width: 40px;
    height: 80px;
    display: flex;
    flex-direction: column;
    background-color: white;
    box-shadow: 0 1px 3px rgba(0, 0, 0, .15);
}

.map-zoom svg {
    display: block;
}

.map-zoom-sep {
    height: 1px;
    margin: -1px 6px 0;
    background-color: #e6e6e6;
}

.map-attr {
    position: absolute;
    right: 6px;
    bottom: -1px;
    display: flex;
    gap: 12px;
    font-family: Roboto, sans-serif;
    font-size: 10px;
    line-height: 14px;
    color: #333;
}

/* thong tin */
.info-row {
    margin-top: 28px;
    display: grid;
    grid-template-columns: repeat(3, 410px);
    gap: 20px;
}

.info-card {
    height: 64px;
    padding: 9px 10px;
    display: flex;
    gap: 10px;
    background-color: #f6f6f6;
    border-radius: 5px;
}

.info-body {
    padding-top: 1px;
}

.info-icon {
    width: 40px;
    height: 40px;
    flex: none;
    display: flex;
    align-items: center;
    justify-content: center;
    border-radius: 50%;
    background-color: #ef4f2d;
}

.info-q {
    color: white;
    font-size: 27px;
    font-weight: 800;
}

.info-title {
    font-size: 16px;
    line-height: 22px;
    color: #333;
}

.info-text {
    margin-top: 2px;
    font-size: 14px;
    line-height: 20px;
    color: #444;
}

/* form */
.contact-form {
    display: grid;
    grid-template-columns: 410px 840px;
    gap: 20px;
    height: 254px;
}

.contact-form label {
    display: block;
    margin-top: 11px;
    font-size: 16px;
    line-height: 22px;
    color: #333;
}

.contact-form label b {
    color: #f01c1c;
    font-weight: 500;
}

.contact-form input,
.contact-form textarea {
    display: block;
    width: 100%;
    margin-top: 7px;
    border: none;
    outline: none;
    border-radius: 8px;
    background-color: #f6f6f6;
    resize: none;
}

.contact-form input {
    height: 40px;
    margin-bottom: 15px;
}

.contact-form textarea {
    height: 122px;
}

.contact-form button {
    display: block;
    width: 115px;
    height: 40px;
    margin-top: 16px;
    padding-bottom: 2px;
    border: 1px solid #3f9a45;
    border-radius: 5px;
    background-color: #ef4f2d;
    color: white;
    font-family: Inter, sans-serif;
    font-size: 14px;
}

/* footer */
.site-footer {
    width: 1915px;
}

.news-bar {
    height: 80px;
    background-color: #ef4f2d;
}

.news-inner {
    width: 1273px;
    height: 80px;
    margin: auto;
    padding-right: 3px;
    display: flex;
    align-items: center;
    justify-content: space-between;
}

.social {
    display: flex;
    gap: 18px;
    margin-left: -1px;
}

.soc {
    width: 38px;
    height: 38px;
    display: flex;
    align-items: center;
    justify-content: center;
    border: 2px solid rgba(255, 255, 255, .45);
    border-radius: 50%;
    overflow: hidden;
}

.soc-fb {
    background-color: #3b5998;
}

.soc-ig {
    background-image: radial-gradient(circle at 15% 15%, #ffdd00 0, #fd5e3a 40%, #e0218a 65%, #7a2bc4 100%);
}

.soc-lz {
    background-color: #101772;
}

.soc-sp {
    background-color: #ee4d2d;
}

.soc-tt {
    background-color: black;
}

.soc-s {
    font-family: Inter, sans-serif;
    font-size: 12px;
    fill: #ee4d2d;
}

.news-right {
    display: flex;
    align-items: center;
    gap: 30px;
}

.news-title {
    font-size: 15.7px;
    font-weight: 600;
    color: white;
}

.news-form {
    display: flex;
    width: 345px;
    height: 38px;
    border-radius: 4px;
    overflow: hidden;
}

.news-form input {
    flex: 1;
    min-width: 0;
    padding: 0 16px;
    border: none;
    outline: none;
    font-family: Inter, sans-serif;
    font-size: 14px;
}

.news-form input::placeholder {
    color: #777;
}

.news-form button {
    width: 84px;
    border: none;
    background-color: #333;
    color: white;
    font-family: Inter, sans-serif;
    font-size: 14px;
    font-weight: 600;
}

.footer-main {
    width: 1273px;
    margin: auto;
    padding-top: 34px;
    padding-bottom: 14px;
    display: grid;
    grid-template-columns: 322.5px 322.5px 322.5px 1fr;
}

.footer-col h3 {
    margin: 44px 0 0;
    font-size: 15.8px;
    line-height: 22px;
    font-weight: 600;
    color: #ef4f2d;
}

.contact-list,
.link-list {
    margin: 0;
    padding: 0;
    list-style: none;
    color: #444;
}

.contact-list {
    margin-top: 21px;
}

.contact-list li {
    display: flex;
    gap: 10px;
    line-height: 21px;
    margin-bottom: 14px;
}

.contact-list li:first-child {
    margin-bottom: 12px;
}

.contact-list svg {
    width: 20px;
    flex: none;
}

.link-list {
    margin-top: 17px;
}

.link-list li {
    height: 36px;
    line-height: 20px;
}

.pay {
    display: block;
    margin-top: 17px;
    overflow: visible;
}

.badge {
    display: block;
    margin-top: 29px;
}

.pay-visa {
    font-family: "Liberation Sans", sans-serif;
    font-size: 18px;
    font-weight: 700;
    font-style: italic;
    fill: #1a4e8f;
}

.pay-jcb {
    font-family: "Liberation Sans", sans-serif;
    font-size: 11px;
    font-weight: 700;
    fill: white;
}

.pay-momo {
    font-family: Inter, sans-serif;
    font-size: 9.5px;
    font-weight: 700;
    fill: white;
}

.pay-zalo {
    font-family: Inter, sans-serif;
    font-size: 6.5px;
    font-weight: 600;
    fill: #2f9ae8;
}

.pay-zalo-w {
    fill: white;
}

.pay-cod {
    font-family: Inter, sans-serif;
    font-size: 7px;
    fill: white;
}

.pay-napas {
    font-family: Inter, sans-serif;
    font-size: 17px;
    font-weight: 800;
    font-style: italic;
    fill: #1b3d7a;
}

.pay-vn {
    font-family: "Liberation Serif", serif;
    font-size: 15px;
    font-weight: 700;
    fill: #e5252a;
}

.pay-qr {
    font-family: "Liberation Sans", sans-serif;
    font-size: 6px;
    font-weight: 700;
    fill: #e5252a;
}

.pay-pp {
    font-family: "Liberation Sans", sans-serif;
    font-size: 18px;
    font-weight: 700;
    font-style: italic;
    fill: #1b3d7a;
}

.badge-top {
    font-family: "Liberation Sans", sans-serif;
    font-size: 13px;
    font-weight: 700;
    fill: white;
}

.badge-bot {
    font-family: "Liberation Sans", sans-serif;
    font-size: 10px;
    fill: #e2f1fb;
}
```
